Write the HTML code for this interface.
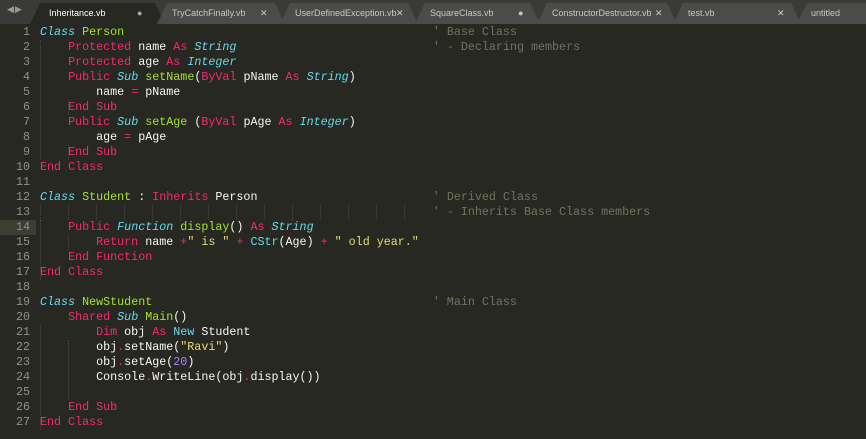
<!DOCTYPE html>
<html><head><meta charset="utf-8"><style>
*{margin:0;padding:0;box-sizing:border-box}
body{width:866px;height:439px;background:#272822;overflow:hidden;position:relative;font-family:"Liberation Mono",monospace}
#bar{position:absolute;left:0;top:0;width:866px;height:24px;background:#3a3a38}
.tab{position:absolute;top:3px;height:21px;background:#4b4b49;font-family:"Liberation Sans",sans-serif;font-size:9px;color:#c8c8c8;line-height:20px;clip-path:polygon(0 100%,10px 0,calc(100% - 10px) 0,100% 100%)}
.tab.a{background:#272822;color:#fff}
.tab span{position:absolute}
.arrows{position:absolute;left:7px;top:5px;color:#999;font-size:9px;font-family:"DejaVu Sans",sans-serif;letter-spacing:1px}
#code{position:absolute;left:0;top:25px;font-size:11.7px;line-height:15px;white-space:pre;color:#f8f8f2}
.ln{position:absolute;left:0;width:30px;text-align:right;color:#90908a}
.tx{position:absolute;left:40px}
.hl{position:absolute;left:0;width:36px;height:15px;background:#3e3d32}
.k{color:#f92672}.t{color:#66d9ef;font-style:italic}.c{color:#66d9ef}.f{color:#a6e22e}.s{color:#e6db74}.n{color:#ae81ff}.m{color:#75715e}
.g{position:absolute;width:0;border-left:1px dotted #4a4a44}
</style></head><body>
<div id="bar">
<div class="arrows">◀▶</div>
<div class="tab a" style="left:30px;width:135px"><span style="left:19px">Inheritance.vb</span><span style="left:107px;color:#aaa">●</span></div>
<div class="tab" style="left:157px;width:128px"><span style="left:15px">TryCatchFinally.vb</span><span style="left:103px">✕</span></div>
<div class="tab" style="left:280px;width:138px"><span style="left:15px">UserDefinedException.vb</span><span style="left:116px">✕</span></div>
<div class="tab" style="left:415px;width:125px"><span style="left:15px">SquareClass.vb</span><span style="left:103px">●</span></div>
<div class="tab" style="left:537px;width:140px"><span style="left:15px">ConstructorDestructor.vb</span><span style="left:118px">✕</span></div>
<div class="tab" style="left:673px;width:128px"><span style="left:15px">test.vb</span><span style="left:104px">✕</span></div>
<div class="tab" style="left:797px;width:90px"><span style="left:14px">untitled</span></div>
</div>
<div id="code">
<div class="hl" style="top:195px"></div>
<div class="g" style="left:40px;top:15px;height:120px"></div>
<div class="g" style="left:68px;top:75px;height:15px"></div>
<div class="g" style="left:68px;top:120px;height:15px"></div>
<div class="g" style="left:40px;top:195px;height:60px"></div>
<div class="g" style="left:68px;top:210px;height:15px"></div>
<div class="g" style="left:40px;top:300px;height:105px"></div>
<div class="g" style="left:68px;top:315px;height:60px"></div>
<div style="position:absolute;top:180px;left:0;height:15px;width:440px">
<div class="g" style="left:40px;top:0;height:15px"></div><div class="g" style="left:68px;top:0;height:15px"></div><div class="g" style="left:96px;top:0;height:15px"></div><div class="g" style="left:124px;top:0;height:15px"></div><div class="g" style="left:152px;top:0;height:15px"></div><div class="g" style="left:180px;top:0;height:15px"></div><div class="g" style="left:208px;top:0;height:15px"></div><div class="g" style="left:236px;top:0;height:15px"></div><div class="g" style="left:264px;top:0;height:15px"></div><div class="g" style="left:292px;top:0;height:15px"></div><div class="g" style="left:320px;top:0;height:15px"></div><div class="g" style="left:348px;top:0;height:15px"></div><div class="g" style="left:376px;top:0;height:15px"></div><div class="g" style="left:404px;top:0;height:15px"></div></div>
<div class="ln" style="top:0">1
2
3
4
5
6
7
8
9
10
11
12
13
14
15
16
17
18
19
20
21
22
23
24
25
26
27</div>
<div class="tx" style="top:0"><span class="t">Class</span> <span class="f">Person</span>                                            <span class="m">' Base Class</span>
    <span class="k">Protected</span> name <span class="k">As</span> <span class="t">String</span>                            <span class="m">' - Declaring members</span>
    <span class="k">Protected</span> age <span class="k">As</span> <span class="t">Integer</span>
    <span class="k">Public</span> <span class="t">Sub</span> <span class="f">setName</span>(<span class="k">ByVal</span> pName <span class="k">As</span> <span class="t">String</span>)
        name <span class="k">=</span> pName
    <span class="k">End Sub</span>
    <span class="k">Public</span> <span class="t">Sub</span> <span class="f">setAge</span> (<span class="k">ByVal</span> pAge <span class="k">As</span> <span class="t">Integer</span>)
        age <span class="k">=</span> pAge
    <span class="k">End Sub</span>
<span class="k">End Class</span>

<span class="t">Class</span> <span class="f">Student</span> : <span class="k">Inherits</span> Person                         <span class="m">' Derived Class</span>
                                                        <span class="m">' - Inherits Base Class members</span>
    <span class="k">Public</span> <span class="t">Function</span> <span class="f">display</span>() <span class="k">As</span> <span class="t">String</span>
        <span class="k">Return</span> name <span class="k">+</span><span class="s">" is "</span> <span class="k">+</span> <span class="c">CStr</span>(Age) <span class="k">+</span> <span class="s">" old year."</span>
    <span class="k">End Function</span>
<span class="k">End Class</span>

<span class="t">Class</span> <span class="f">NewStudent</span>                                        <span class="m">' Main Class</span>
    <span class="k">Shared</span> <span class="t">Sub</span> <span class="f">Main</span>()
        <span class="k">Dim</span> obj <span class="k">As</span> <span class="c">New</span> Student
        obj<span class="k">.</span>setName(<span class="s">"Ravi"</span>)
        obj<span class="k">.</span>setAge(<span class="n">20</span>)
        Console<span class="k">.</span>WriteLine(obj<span class="k">.</span>display())

    <span class="k">End Sub</span>
<span class="k">End Class</span></div>
</div>
</body></html>
